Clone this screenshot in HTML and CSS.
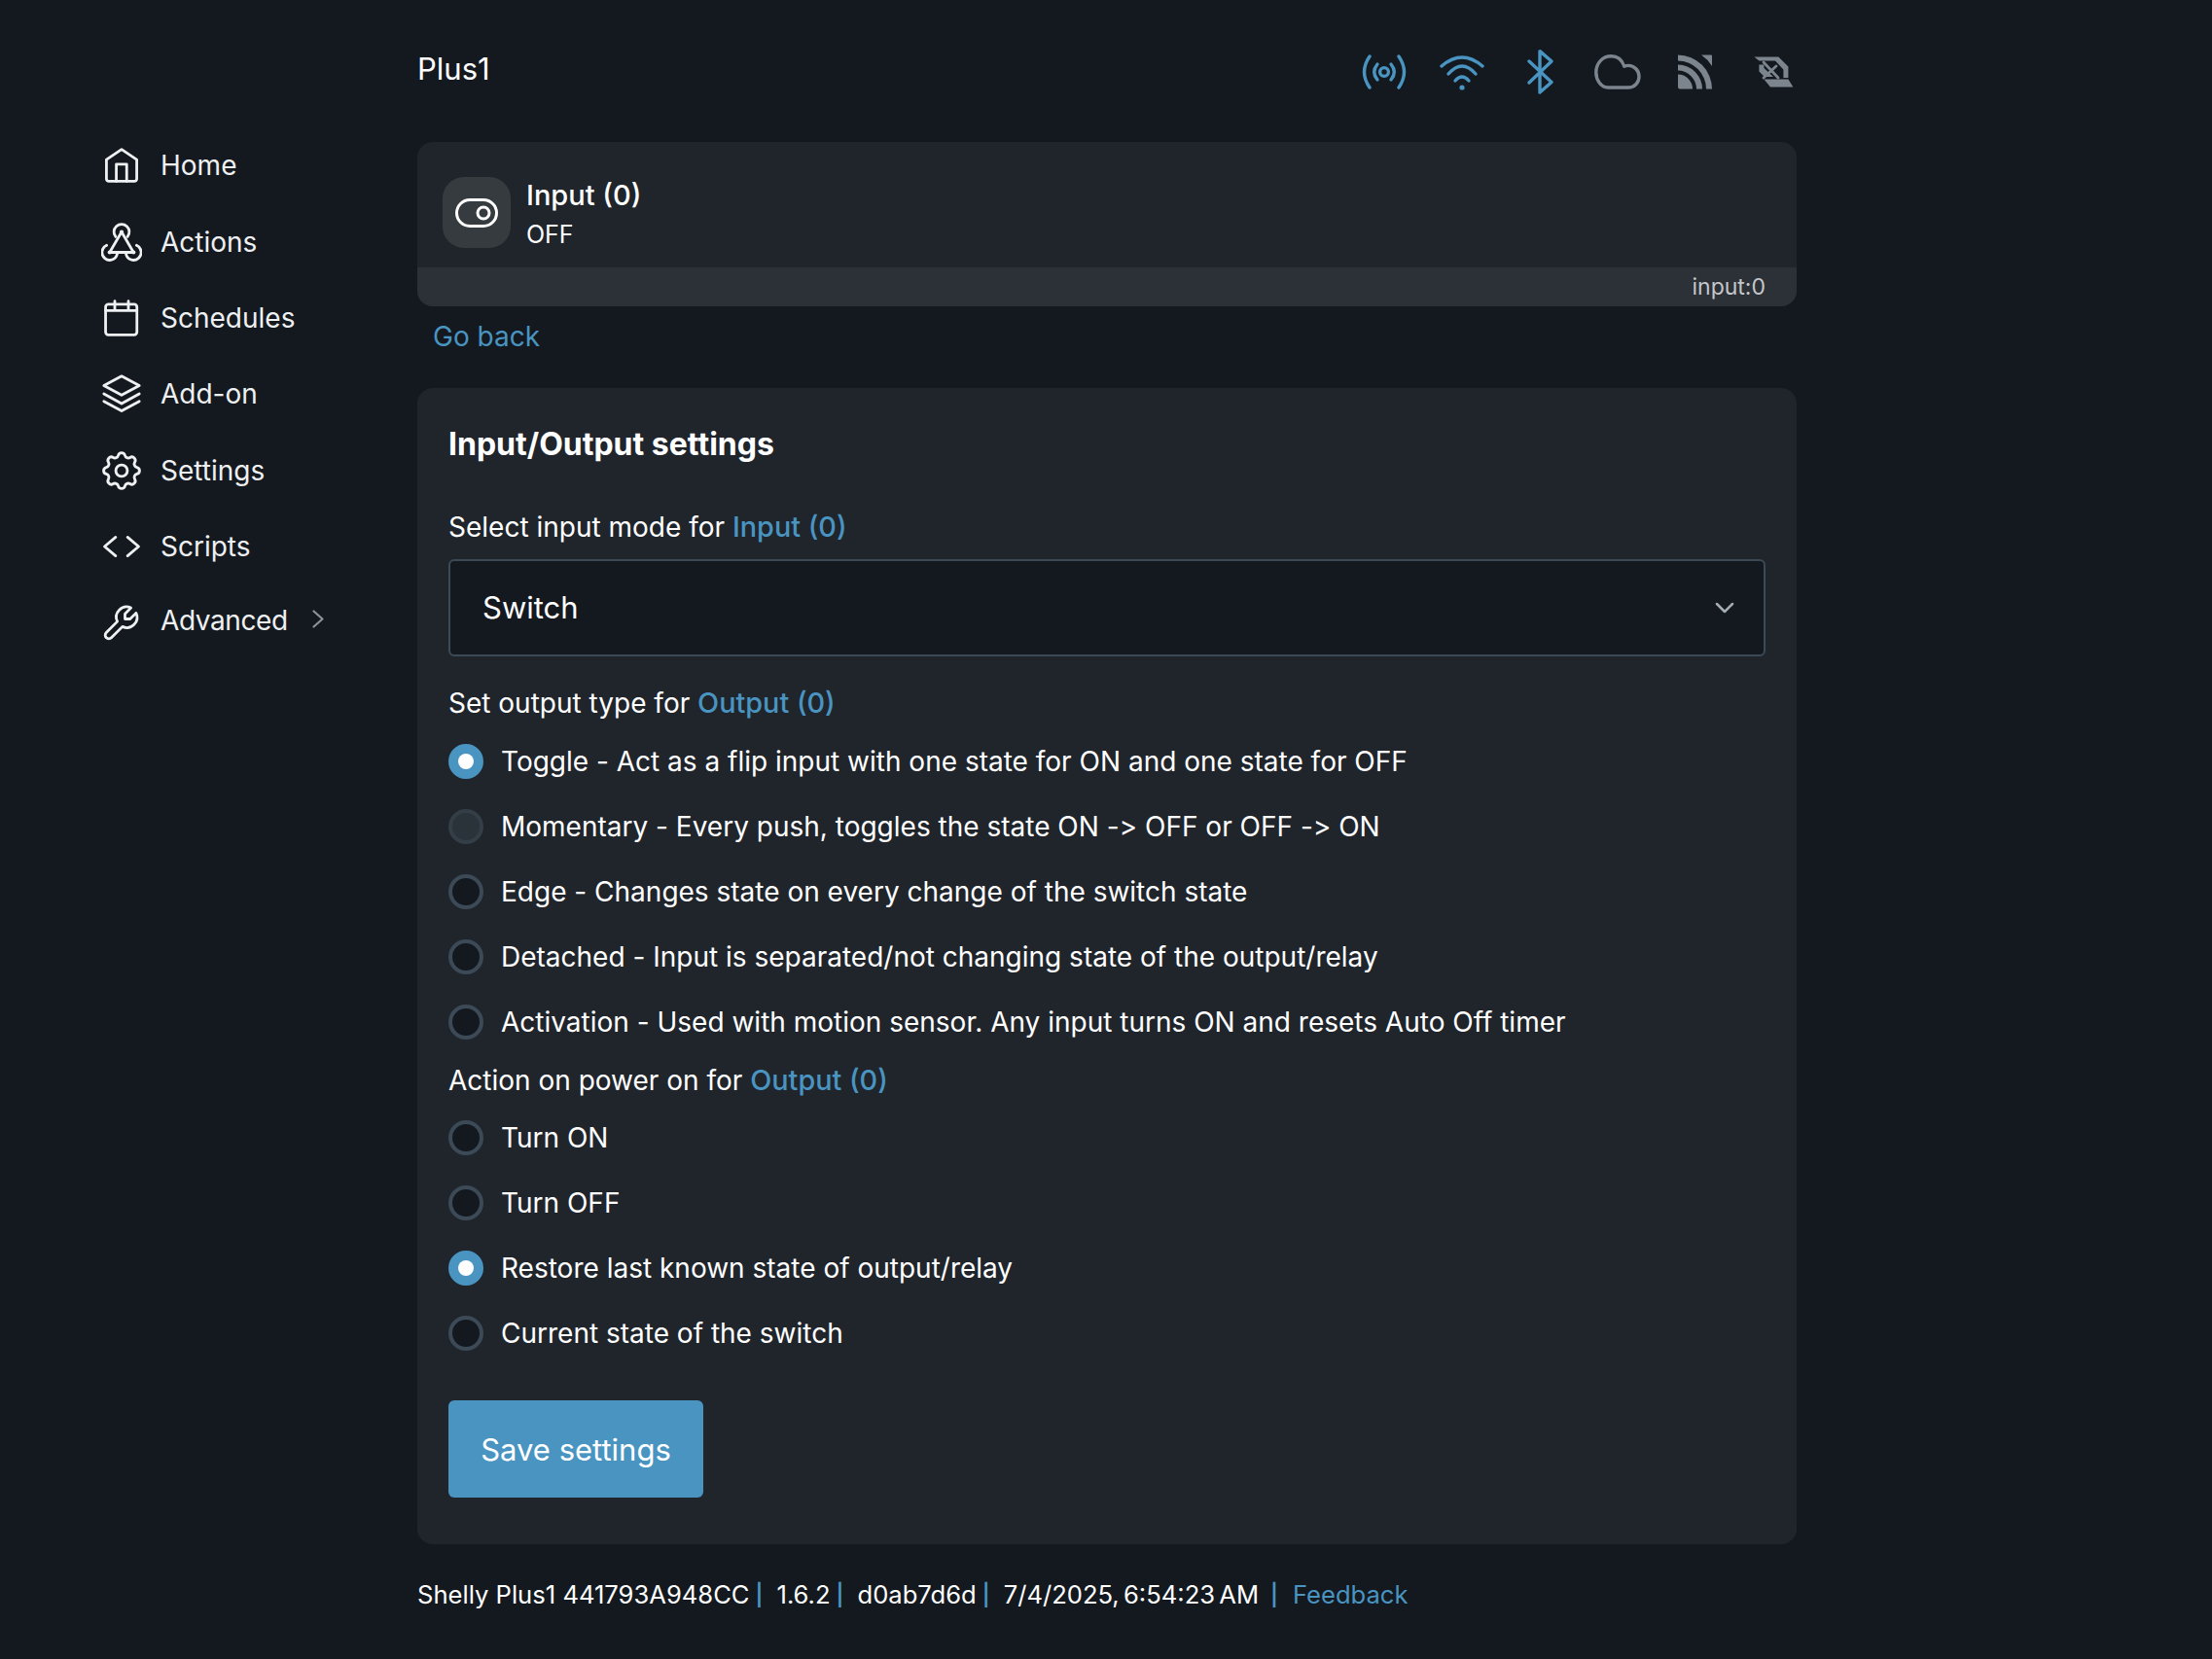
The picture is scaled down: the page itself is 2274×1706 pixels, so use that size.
FILE: index.html
```html
<!DOCTYPE html>
<html lang="en">
<head>
  <meta charset="UTF-8">
  <title>Plus1</title>
  <link rel="stylesheet" href="styles.css">
</head>
<body>
  <div class="layout">
    <nav class="sidebar">
      <a class="nav-item"><svg class="nav-icon" viewBox="0 0 24 24"><path d="M12 2.600 3.100 8.600V20a1.400 1.400 0 0 0 1.400 1.400h15a1.400 1.400 0 0 0 1.400-1.400V8.600z"/><path d="M8.900 21.400v-10h6.100v10"/></svg>Home</a>
      <a class="nav-item"><svg class="nav-icon" viewBox="0 0 24 24"><path d="M8.500 8.800a4.500 4.500 0 1 1 7 0"/><path d="M3.200 13.900a4.500 4.500 0 1 0 6.200 5.100"/><path d="M14.600 19a4.500 4.500 0 1 0 6.200-5.100"/><path d="M12 6 5 18h14z"/><circle class="dot" cx="12" cy="6" r="1.200"/><circle class="dot" cx="5" cy="18" r="1.200"/><circle class="dot" cx="19" cy="18" r="1.200"/></svg>Actions</a>
      <a class="nav-item"><svg class="nav-icon" viewBox="0 0 24 24"><rect x="2.600" y="3.900" width="18.400" height="18" rx="1.600"/><path d="M2.600 7.600H21M8 2.100v5.500M16 2.100v5.500"/></svg>Schedules</a>
      <a class="nav-item"><svg class="nav-icon" viewBox="0 0 24 24"><path d="M12 1.600 1.600 7.200 12 12.700l10.400-5.500z"/><path d="m1.600 12 10.400 5.700L22.400 12"/><path d="m1.600 16.400L12 22l10.400-5.600"/></svg>Add-on</a>
      <a class="nav-item"><svg class="nav-icon" viewBox="0 0 24 24"><g class="gear"><path d="M10.325 4.317c.426 -1.756 2.924 -1.756 3.350 0a1.724 1.724 0 0 0 2.573 1.066c1.543 -.94 3.310 .826 2.370 2.370a1.724 1.724 0 0 0 1.065 2.572c1.756 .426 1.756 2.924 0 3.350a1.724 1.724 0 0 0 -1.066 2.573c.94 1.543 -.826 3.310 -2.370 2.370a1.724 1.724 0 0 0 -2.572 1.065c-.426 1.756 -2.924 1.756 -3.350 0a1.724 1.724 0 0 0 -2.573 -1.066c-1.543 .94 -3.310 -.826 -2.370 -2.370a1.724 1.724 0 0 0 -1.065 -2.572c-1.756 -.426 -1.756 -2.924 0 -3.350a1.724 1.724 0 0 0 1.066 -2.573c-.94 -1.543 .826 -3.310 2.370 -2.370c1 .608 2.296 .07 2.572 -1.065z"/><circle cx="12" cy="12" r="2.900"/></g></svg>Settings</a>
      <a class="nav-item"><svg class="nav-icon" viewBox="0 0 24 24"><path d="M8.500 6.500 2 12l6.500 5.500M15.500 6.500 22 12l-6.500 5.500"/></svg>Scripts</a>
      <a class="nav-item nav-advanced"><svg class="nav-icon" viewBox="0 0 24 24"><path d="M17 10h-3V7l3.500-3.500a6 6 0 0 0-8 8l-6.500 6.500a2 2 0 0 0 3 3l6.500-6.500a6 6 0 0 0 8-8L17 10"/></svg>Advanced<svg class="nav-chevron" viewBox="0 0 12 19"><path d="m1.500 1.500 9 8-9 8"/></svg></a>
    </nav>

    <main class="content">
      <header class="topbar">
        <span class="device-name">Plus1</span>
        <div class="status-icons">
          <svg class="status-icon on" viewBox="0 0 24 24"><circle cx="12" cy="12.500" r="2.200"/><path d="M8.500 8.500Q5.200 12.500 8.500 16.500M15.500 8.500Q18.800 12.500 15.500 16.500"/><path d="M4.500 4.500Q-1 12.500 4.500 20.500M19.500 4.500Q25 12.500 19.500 20.500"/></svg>
          <svg class="status-icon on" viewBox="0 0 24 24"><path d="M12 20.500h.01" stroke-width="2.600"/><path d="M8.500 17Q12 13 15.500 17"/><path d="M5 13.500Q12 5.500 19 13.500"/><path d="M1.500 9.500Q12 .5 22.500 9.500"/></svg>
          <svg class="status-icon on" viewBox="0 0 24 24"><path d="M6.500 7 18 17.700 12 23V1.800L18 7 6.500 18"/></svg>
          <svg class="status-icon off" viewBox="0 0 24 24"><path d="M7 20.500C3.300 20.500 .9 16.500 .9 12.600C.9 8 4.200 4.400 8.700 4.400C11.900 4.400 14.300 6.500 15.400 9.600C16 9.300 16.800 9.200 17.500 9.200C20.600 9.200 23 11.800 23 14.900C23 18 20.600 20.500 17.500 20.500Z"/></svg>
          <svg class="status-icon off" viewBox="0 0 24 24"><path class="solid" d="M3 13.800A7.500 7.500 0 0 1 10.500 21.300H4a1 1 0 0 1-1-1zM3 8.800A12.500 12.500 0 0 1 15.500 21.300H12.500A9.500 9.500 0 0 0 3 11.800zM3 3.800A17.500 17.500 0 0 1 20.500 21.300H17.500A14.500 14.500 0 0 0 3 6.800zM15 3.800H20a.5 .5 0 0 1 .5 .5V9.500A19 19 0 0 0 15 3.800z"/></svg>
          <svg class="status-icon off" viewBox="0 0 24 24"><path class="solid" d="M2.200 4.700H14.700L19.700 9.700V15.500H17.200V11.300L13 6.800H4.700zM7.200 16.300H19.700L22.200 20.200H10.500zM4.700 8.800H7.200V10.500L12 15H7.500L4.700 12.200z"/><path d="M7 7.500 14.500 15.500M7 15.500 13.500 9.500" stroke-width="1.400"/></svg>
        </div>
      </header>

      <section class="device-card">
        <div class="device-main">
          <div class="device-badge"><svg class="toggle-icon" viewBox="0 0 44 30"><rect x="1.500" y="1.500" width="41" height="27" rx="13.500"/><circle cx="29" cy="15" r="6"/></svg></div>
          <div class="device-text">
            <div class="device-title">Input (0)</div>
            <div class="device-state">OFF</div>
          </div>
        </div>
        <div class="device-foot">input:0</div>
      </section>

      <a class="back-link">Go back</a>

      <section class="settings-card">
        <h2>Input/Output settings</h2>

        <p class="field-label first">Select input mode for <span class="link">Input (0)</span></p>
        <div class="select">
          <span>Switch</span>
          <svg class="select-arrow" viewBox="0 0 20 12"><path d="m2 2 8 8 8-8"/></svg>
        </div>

        <p class="field-label">Set output type for <span class="link">Output (0)</span></p>
        <div class="radio-group">
          <div class="radio-row"><span class="radio checked"></span>Toggle - Act as a flip input with one state for ON and one state for OFF</div>
          <div class="radio-row"><span class="radio hover"></span>Momentary - Every push, toggles the state ON -&gt; OFF or OFF -&gt; ON</div>
          <div class="radio-row"><span class="radio"></span>Edge - Changes state on every change of the switch state</div>
          <div class="radio-row"><span class="radio"></span>Detached - Input is separated/not changing state of the output/relay</div>
          <div class="radio-row"><span class="radio"></span>Activation - Used with motion sensor. Any input turns ON and resets Auto Off timer</div>
        </div>

        <p class="field-label tight">Action on power on for <span class="link">Output (0)</span></p>
        <div class="radio-group after-tight">
          <div class="radio-row"><span class="radio"></span>Turn ON</div>
          <div class="radio-row"><span class="radio"></span>Turn OFF</div>
          <div class="radio-row"><span class="radio checked"></span>Restore last known state of output/relay</div>
          <div class="radio-row"><span class="radio"></span>Current state of the switch</div>
        </div>

        <button class="save-btn">Save settings</button>
      </section>

      <footer class="page-foot">
        <span>Shelly Plus1 441793A948CC</span><i>|</i>
        <span>1.6.2</span><i>|</i>
        <span>d0ab7d6d</span><i>|</i>
        <span class="foot-date">7/4/2025, 6:54:23 AM</span><i class="wide">|</i>
        <a class="feedback">Feedback</a>
      </footer>
    </main>
  </div>
</body>
</html>
```

FILE: styles.css
```css
* {
  box-sizing: border-box;
}

body {
  margin: 0;
  min-height: 100vh;
  background-color: #14191f;
  color: #fff;
  font-family: "Inter", sans-serif;
  font-size: 28px;
  line-height: 40px;
}

.layout {
  display: flex;
  align-items: flex-start;
}

/* left menu */
.sidebar {
  width: 429px;
  padding: 131px 0 0 104px;
  display: flex;
  flex-direction: column;
}

.nav-item {
  height: 78.400px;
  display: flex;
  align-items: center;
  color: #eef0f2;
}

.nav-advanced {
  margin-top: -3px;
  letter-spacing: -0.400px;
}

.nav-icon {
  width: 42px;
  height: 42px;
  margin-right: 19px;
  flex: none;
  fill: none;
  stroke: #eef0f2;
  stroke-width: 1.600;
  stroke-linecap: round;
  stroke-linejoin: round;
}

.nav-advanced .nav-icon {
  margin-top: 4px;
}

.nav-icon .dot {
  fill: #eef0f2;
  stroke: none;
}

.nav-icon .gear {
  transform: scale(1.170);
  transform-origin: 12px 12px;
  stroke-width: 1.400;
}

.nav-chevron {
  width: 12px;
  height: 19px;
  margin-left: 25px;
  margin-top: -3px;
  fill: none;
  stroke: #8a939b;
  stroke-width: 2.200;
  stroke-linecap: round;
  stroke-linejoin: round;
}

.content {
  width: 1418px;
}

/* top row */
.topbar {
  height: 146px;
  display: flex;
  justify-content: space-between;
  align-items: center;
}

.device-name {
  font-size: 31px;
  padding-bottom: 4px;
}

.status-icons {
  display: flex;
  gap: 32px;
}

.status-icon {
  width: 48px;
  height: 48px;
  fill: none;
  stroke-width: 1.700;
  stroke-linecap: round;
  stroke-linejoin: round;
}

.status-icon.on {
  stroke: #4994c1;
}

.status-icon.off {
  stroke: #7c858d;
}

.status-icon .solid {
  fill: #7c858d;
  stroke: none;
}

/* input card */
.device-card {
  background-color: #20252c;
  border-radius: 16px;
  overflow: hidden;
}

.device-main {
  height: 129px;
  padding: 16px 26px 0;
  display: flex;
  align-items: center;
  gap: 16px;
}

.device-badge {
  width: 70px;
  height: 73px;
  border-radius: 22px;
  background-color: #363b3f;
  display: flex;
  align-items: center;
  justify-content: center;
}

.toggle-icon {
  width: 44px;
  height: 30px;
  fill: none;
  stroke: #fff;
  stroke-width: 3;
}

.device-text {
  margin-top: 3px;
}

.device-title {
  font-size: 29px;
  font-weight: 500;
  line-height: 41px;
}

.device-state {
  font-size: 25px;
  line-height: 40px;
}

.device-foot {
  height: 40px;
  padding-right: 32px;
  background-color: #2c3037;
  color: #c4c6c9;
  font-size: 23px;
  line-height: 41px;
  text-align: right;
}

.back-link {
  display: block;
  height: 84px;
  padding: 11px 0 0 16px;
  color: #4994c1;
}

/* settings */
.settings-card {
  padding: 35px 32px 48px;
  background-color: #20252c;
  border-radius: 16px;
}

.settings-card h2 {
  margin: 0;
  font-size: 32px;
  font-weight: 700;
  line-height: 46px;
}

.field-label {
  margin: 0;
  line-height: 40px;
}

.field-label.first {
  margin-top: 42px;
  margin-bottom: 13px;
}

.field-label.tight {
  margin-top: 7px;
}

.link {
  color: #4994c1;
  font-size: 28.800px;
  font-weight: 500;
}

.select {
  height: 100px;
  margin-bottom: 28px;
  padding: 0 30px 0 33px;
  display: flex;
  justify-content: space-between;
  align-items: center;
  background-color: #14191f;
  border: 2px solid #3b4a56;
  border-radius: 6px;
  font-size: 31px;
}

.select-arrow {
  width: 20px;
  height: 12px;
  fill: none;
  stroke: #a5adb4;
  stroke-width: 2.500;
  stroke-linecap: round;
  stroke-linejoin: round;
}

.radio-group {
  margin-top: 6px;
  display: flex;
  flex-direction: column;
  font-variant-ligatures: no-contextual;
}

.radio-group.after-tight {
  margin-top: 5px;
}

.radio-row {
  height: 67px;
  display: flex;
  align-items: center;
  gap: 18px;
}

.radio {
  width: 36px;
  height: 36px;
  flex: none;
  border-radius: 50%;
  background-color: #14191f;
  border: 4px solid #3b4a56;
}

.radio.hover {
  background-color: #2a323a;
  border-color: #333e47;
}

.radio.checked {
  background-color: #4994c1;
  border: 10px solid #4994c1;
  position: relative;
}

.radio.checked::after {
  content: "";
  position: absolute;
  inset: 0;
  border-radius: 50%;
  background-color: #fff;
}

.save-btn {
  display: block;
  width: 262px;
  height: 100px;
  margin-top: 36px;
  padding: 0;
  border: none;
  border-radius: 6px;
  background-color: #4994c1;
  color: #fff;
  font-family: inherit;
  font-size: 31px;
}

/* bottom line */
.page-foot {
  margin-top: 32px;
  display: flex;
  align-items: center;
  font-size: 25.600px;
  line-height: 40px;
}

.page-foot i {
  margin: 0 14px 0 6px;
  color: #4994c1;
  font-size: 22px;
  font-weight: 600;
  font-style: normal;
}

.page-foot i.wide {
  margin: 0 15px 0 12px;
}

.foot-date {
  word-spacing: -3px;
}

.feedback {
  color: #4994c1;
}
```
